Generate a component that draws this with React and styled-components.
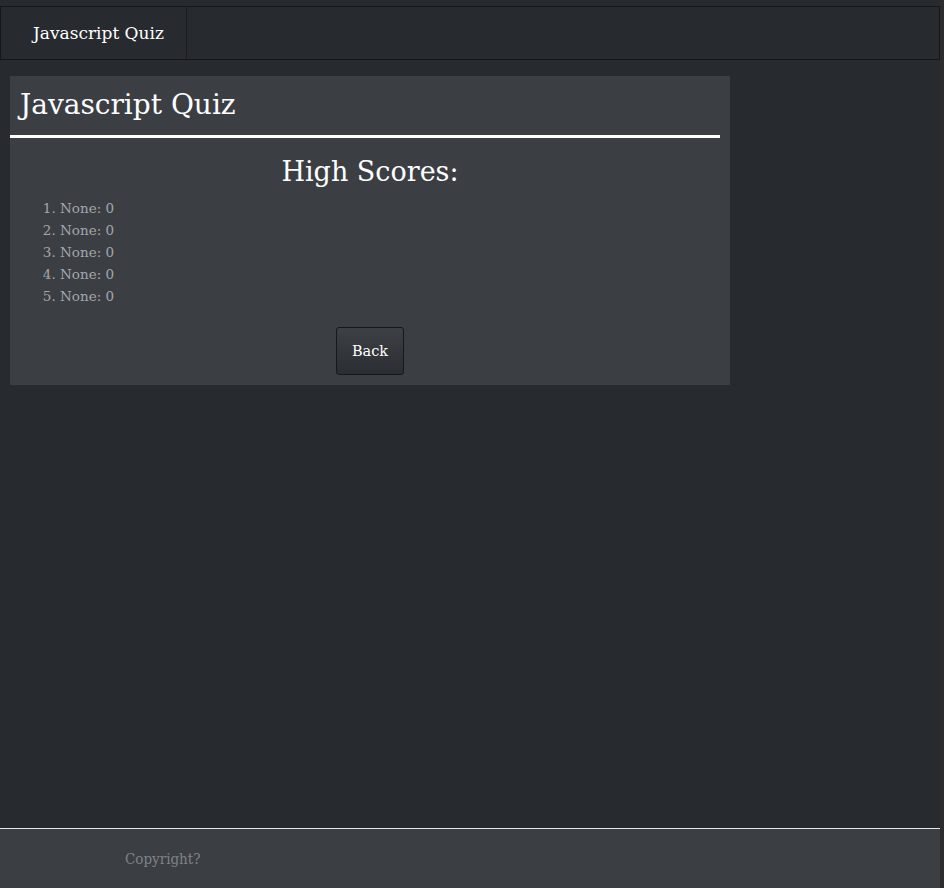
import React from "react";
import styled, { createGlobalStyle } from "styled-components";

const Global = createGlobalStyle`
  html { background: #2c2c2e; }
  body {
    margin: 0;
    background: #2c2c2e;
    font-family: "DejaVu Serif", "Liberation Serif", serif;
  }
`;

const Page = styled.div`
  width: 940px;
  min-height: 888px;
  padding-top: 6px;
  box-sizing: border-box;
  background: #272a2f;
  display: flex;
  flex-direction: column;
`;

const NavBar = styled.nav`
  height: 54px;
  box-sizing: border-box;
  border: 1px solid #141619;
  background: #272a2f;
  display: flex;
`;

const NavItem = styled.a`
  display: flex;
  align-items: center;
  padding: 0 22px 0 32px;
  border-right: 1px solid #1c1e22;
  color: #ffffff;
  font-size: 17px;
  text-decoration: none;
`;

const Main = styled.main`
  flex: 1;
  padding: 16px 10px;
`;

const Card = styled.section`
  width: 720px;
  background: #3b3f44;
  padding-bottom: 10px;
`;

const Title = styled.h1`
  margin: 0 10px 0 0;
  padding: 12px 10px 14px;
  font-size: 28px;
  font-weight: normal;
  color: #ffffff;
  border-bottom: 3px solid #ffffff;
`;

const Heading = styled.h2`
  margin: 18px 0 10px;
  text-align: center;
  font-size: 27px;
  font-weight: normal;
  color: #ffffff;
`;

const List = styled.ol`
  margin: 0;
  padding-left: 50px;
  color: #a3a6aa;
  font-size: 13.5px;
  line-height: 22px;
`;

const Actions = styled.div`
  display: flex;
  justify-content: center;
  margin-top: 20px;
`;

const Button = styled.button`
  width: 68px;
  height: 48px;
  border: 1px solid #16181b;
  border-radius: 3px;
  background: linear-gradient(#3d4146, #2a2d32);
  color: #ffffff;
  font-family: inherit;
  font-size: 14.5px;
  cursor: pointer;
`;

const Footer = styled.footer`
  height: 60px;
  box-sizing: border-box;
  border-top: 1px solid #e6e6e6;
  background: #3b3f44;
  display: flex;
  align-items: center;
  padding-left: 125px;
  color: #7f8387;
  font-family: "DejaVu Serif Condensed", "DejaVu Serif", serif;
  font-size: 15px;
`;

export default function App() {
  const scores = [1, 2, 3, 4, 5].map(() => ({ name: "None", score: 0 }));
  return (
    <>
      <Global />
      <Page>
        <NavBar>
          <NavItem href="#">Javascript Quiz</NavItem>
        </NavBar>
        <Main>
          <Card>
            <Title>Javascript Quiz</Title>
            <Heading>High Scores:</Heading>
            <List>
              {scores.map((s, i) => (
                <li key={i}>
                  {s.name}: {s.score}
                </li>
              ))}
            </List>
            <Actions>
              <Button>Back</Button>
            </Actions>
          </Card>
        </Main>
        <Footer>Copyright?</Footer>
      </Page>
    </>
  );
}
